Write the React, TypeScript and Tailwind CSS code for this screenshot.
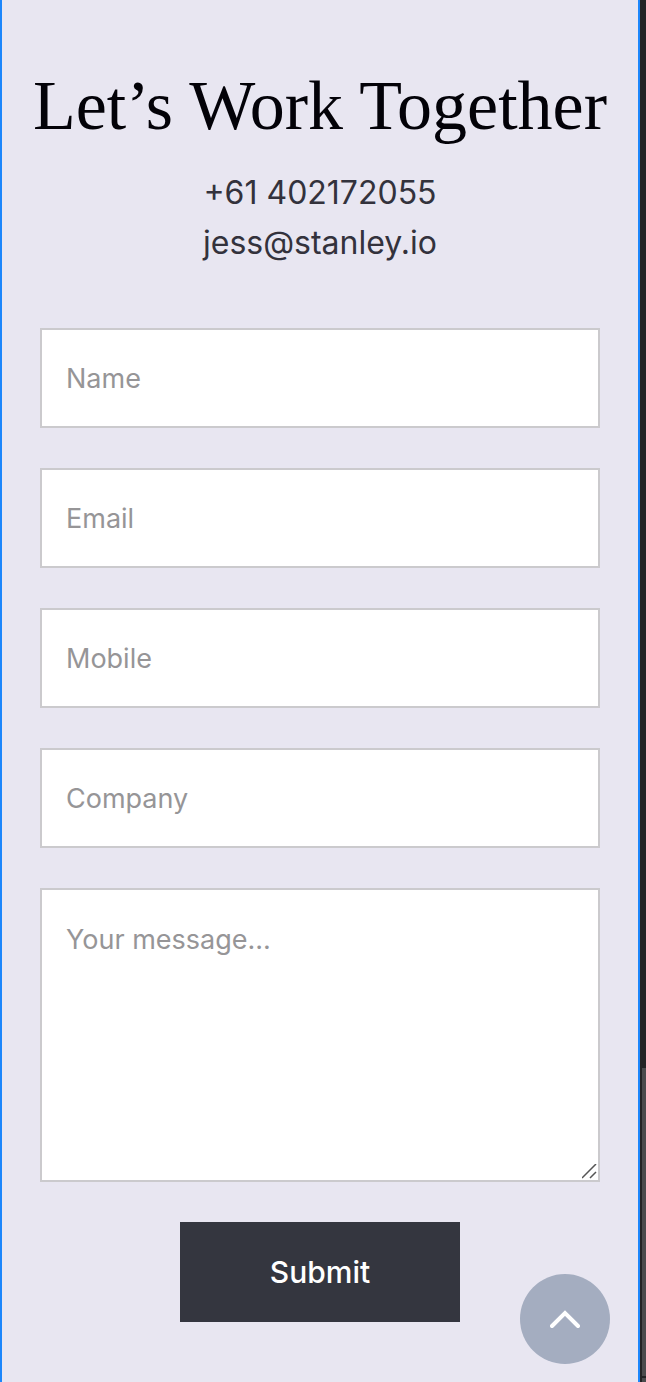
import { FormEvent, useState } from 'react';

const fields = [
  { id: 'name', label: 'Name', type: 'text' },
  { id: 'email', label: 'Email', type: 'email' },
  { id: 'mobile', label: 'Mobile', type: 'tel' },
  { id: 'company', label: 'Company', type: 'text' },
];

const inputStyles =
  'block w-full rounded-none border-2 border-[#cbcacd] bg-white px-6 text-[27px] leading-9 text-[#33353e] placeholder:text-[#969597] outline-none focus:border-[#a4adc0]';

export default function App() {
  const [values, setValues] = useState<Record<string, string>>({});

  const update = (id: string, value: string) => {
    setValues((v) => ({ ...v, [id]: value }));
  };

  const onSubmit = (e: FormEvent) => {
    e.preventDefault();
    setValues({});
  };

  return (
    <div className="flex min-h-screen bg-[#232325] font-['Inter',sans-serif]">
      <main className="min-w-0 flex-1 border-x-2 border-[#1c86fb] bg-[#e8e6f1] pt-16 pb-[60px]">
        <h1 className="whitespace-nowrap text-center font-['Liberation_Serif',serif] text-[70px] leading-[84px] text-[#030208]">
          Let’s Work Together
        </h1>

        <div className="mt-5 flex flex-col items-center text-[32px] leading-[50px] text-[#33323c]">
          <a href="tel:+61402172055">+61 402172055</a>
          <a href="mailto:jess@stanley.io">jess@stanley.io</a>
        </div>

        <form
          className="mt-[60px] flex flex-col gap-10 px-[38px]"
          onSubmit={onSubmit}
        >
          {fields.map((f) => (
            <input
              key={f.id}
              type={f.type}
              aria-label={f.label}
              placeholder={f.label}
              value={values[f.id] ?? ''}
              onChange={(e) => update(f.id, e.target.value)}
              className={`${inputStyles} h-[100px]`}
            />
          ))}
          <div className="relative">
            <textarea
              aria-label="Your message"
              placeholder="Your message..."
              value={values.message ?? ''}
              onChange={(e) => update('message', e.target.value)}
              className={`${inputStyles} h-[294px] resize-y py-8`}
            />
            {/* larger grip drawn over the native one */}
            <svg
              viewBox="0 0 16 16"
              className="pointer-events-none absolute right-0.5 bottom-0.5 size-4 bg-white"
              fill="none"
              stroke="#555"
              strokeWidth="1.5"
            >
              <path d="M0 14 14 0M8 14l6-6" />
            </svg>
          </div>
          <button
            type="submit"
            className="h-[100px] w-1/2 self-center bg-[#34363f] text-[30px] font-medium text-white"
          >
            Submit
          </button>
        </form>
      </main>

      {/* page scrollbar */}
      <div className="flex w-1.5 flex-col justify-end gap-0.5 pl-0.5">
        <div className="h-[308px] bg-[#4b4b4d]" />
        <div className="h-1 bg-[#4b4b4d]" />
      </div>

      <button
        type="button"
        aria-label="Back to top"
        onClick={() => window.scrollTo({ top: 0, behavior: 'smooth' })}
        className="fixed right-9 bottom-[18px] flex size-[90px] items-center justify-center rounded-full bg-[#a4adc0]"
      >
        <svg
          viewBox="0 0 30 20"
          className="h-5 w-[30px]"
          fill="none"
          stroke="white"
          strokeWidth="4"
          strokeLinecap="round"
        >
          <path d="M2 17 15 4l13 13" />
        </svg>
      </button>
    </div>
  );
}
